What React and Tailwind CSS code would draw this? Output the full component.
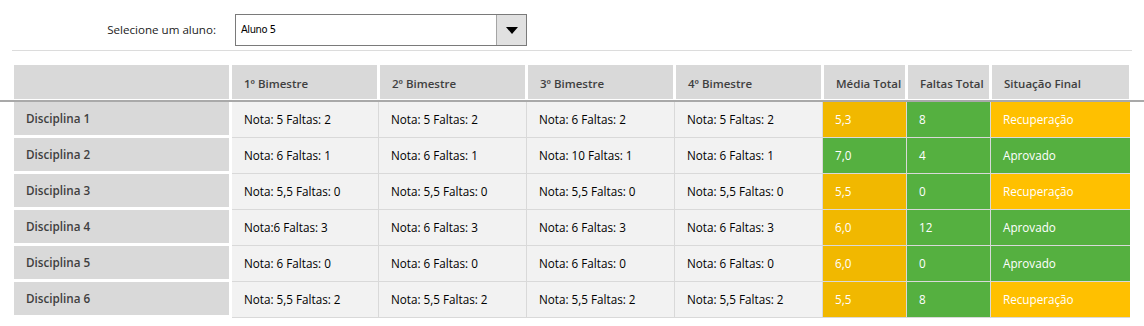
import React from "react";

const rows = [
  { d: "Disciplina 1", b: ["Nota: 5 Faltas: 2", "Nota: 5 Faltas: 2", "Nota: 6 Faltas: 2", "Nota: 5 Faltas: 2"], m: "5,3", f: "8", s: "Recuperação", mg: false, sg: false },
  { d: "Disciplina 2", b: ["Nota: 6 Faltas: 1", "Nota: 6 Faltas: 1", "Nota: 10 Faltas: 1", "Nota: 6 Faltas: 1"], m: "7,0", f: "4", s: "Aprovado", mg: true, sg: true },
  { d: "Disciplina 3", b: ["Nota: 5,5 Faltas: 0", "Nota: 5,5 Faltas: 0", "Nota: 5,5 Faltas: 0", "Nota: 5,5 Faltas: 0"], m: "5,5", f: "0", s: "Recuperação", mg: false, sg: false },
  { d: "Disciplina 4", b: ["Nota:6 Faltas: 3", "Nota: 6 Faltas: 3", "Nota: 6 Faltas: 3", "Nota: 6 Faltas: 3"], m: "6,0", f: "12", s: "Aprovado", mg: false, sg: true },
  { d: "Disciplina 5", b: ["Nota: 6 Faltas: 0", "Nota: 6 Faltas: 0", "Nota: 6 Faltas: 0", "Nota: 6 Faltas: 0"], m: "6,0", f: "0", s: "Aprovado", mg: false, sg: true },
  { d: "Disciplina 6", b: ["Nota: 5,5 Faltas: 2", "Nota: 5,5 Faltas: 2", "Nota: 5,5 Faltas: 2", "Nota: 5,5 Faltas: 2"], m: "5,5", f: "8", s: "Recuperação", mg: false, sg: false },
];

const bimW = ["w-[147px]", "w-[148px]", "w-[148px]", "w-[148px]"];

export default function App() {
  const font = { fontFamily: '"Open Sans", "Noto Sans", sans-serif' };
  return (
    <div className="w-[1144px] h-[326px] bg-white overflow-hidden" style={font}>
      {/* top selector */}
      <div className="flex items-center pt-[14px] h-[46px]">
        <div className="w-[217px] text-right text-[11.6px] text-[#222] pr-px">Selecione um aluno:</div>
        <div className="ml-[18px] w-[292px] h-[32px] flex border border-[#7a7a7a] bg-white">
          <div className="flex-1 flex items-center pl-[5px] text-[11px] tracking-[-0.4px] text-black" style={{ fontFamily: '"DejaVu Sans Condensed", "Liberation Sans", sans-serif' }}>
            Aluno 5
          </div>
          <div className="w-[30px] h-full bg-[#e1e1e1] border-l border-[#a5a5a5] flex items-center justify-center">
            <svg width="12" height="7" viewBox="0 0 12 7"><path d="M0 0 H12 L6 7 Z" fill="#000" /></svg>
          </div>
        </div>
      </div>
      <div className="mt-[4px] mx-[12px] h-px bg-[#dcdcdc]" />

      {/* header */}
      <div className="mt-[14px] flex gap-[3px] pl-[14px] h-[34px] text-[11.5px] font-semibold text-[#3f3f3f]">
        <div className="w-[215px] bg-[#d9d9d9]" />
        {["1º Bimestre", "2º Bimestre", "3º Bimestre", "4º Bimestre"].map((t) => (
          <div key={t} className="w-[145px] bg-[#d9d9d9] flex items-center pl-[12px] pt-[3px]">{t}</div>
        ))}
        <div className="w-[81px] bg-[#d9d9d9] flex items-center pl-[12px] pt-[3px] whitespace-nowrap">Média Total</div>
        <div className="w-[81px] bg-[#d9d9d9] flex items-center pl-[12px] pt-[3px] whitespace-nowrap">Faltas Total</div>
        <div className="w-[137px] bg-[#d9d9d9] flex items-center pl-[12px] pt-[3px]">Situação Final</div>
      </div>
      <div className="mt-px h-[2px] bg-[#a9a9a9]" />

      {/* body */}
      <div className="flex flex-col">
        {rows.map((r) => (
          <div key={r.d} className="flex h-[36px] text-[11.7px]">
            <div className="ml-[14px] w-[215px] h-[33px] bg-[#d9d9d9] flex items-center pl-[12px] font-semibold text-[#3f3f3f]">{r.d}</div>
            <div className="w-[3px]" />
            {r.b.map((t, i) => (
              <div key={i} className={`${bimW[i]} h-full bg-[#f2f2f2] border-r border-b border-[#d9d9d9] flex items-center pl-[12px] text-black whitespace-nowrap`}>{t}</div>
            ))}
            <div className={`w-[84px] h-full ${r.mg ? "bg-[#55b040]" : "bg-[#f1b800]"} border-r border-b border-[#d9d9d9] flex items-center pl-[12px] text-white`}>{r.m}</div>
            <div className="w-[84px] h-full bg-[#55b040] border-r border-b border-[#d9d9d9] flex items-center pl-[12px] text-white">{r.f}</div>
            <div className={`w-[139px] h-full ${r.sg ? "bg-[#55b040]" : "bg-[#ffc000]"} border-b border-[#d9d9d9] flex items-center pl-[12px] text-white`}>{r.s}</div>
          </div>
        ))}
      </div>
    </div>
  );
}
